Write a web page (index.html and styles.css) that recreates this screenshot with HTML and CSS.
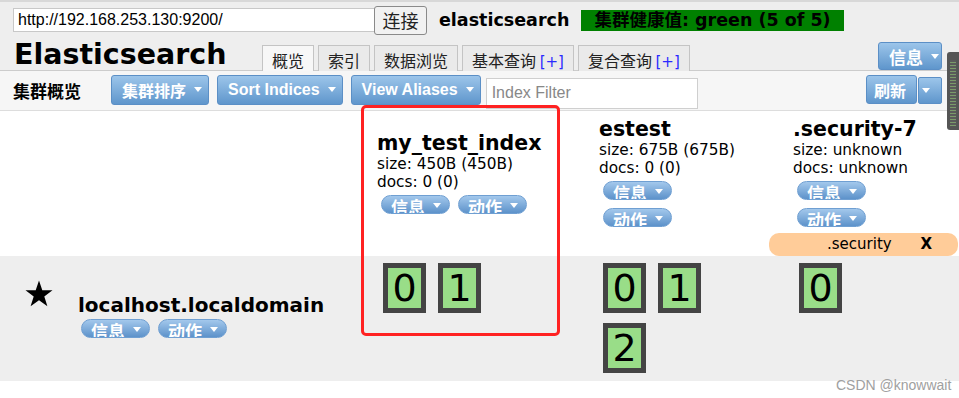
FILE: index.html
```html
<!DOCTYPE html>
<html lang="zh-CN">
<head>
    <meta charset="UTF-8">
    <title>elasticsearch-head</title>
    <link rel="stylesheet" href="styles.css">
</head>
<body>
    <div class="header">
        <div class="conn-row">
            <input class="base-uri" type="text" value="http://192.168.253.130:9200/">
            <button class="connect-btn">连接</button>
            <span class="cluster-name">elasticsearch</span>
            <span class="health">集群健康值: green (5 of 5)</span>
        </div>
        <div class="title-row">
            <div class="logo">Elasticsearch</div>
            <div class="tabs">
                <div class="tab active">概览</div>
                <div class="tab">索引</div>
                <div class="tab">数据浏览</div>
                <div class="tab">基本查询 <span class="plus">[+]</span></div>
                <div class="tab">复合查询 <span class="plus">[+]</span></div>
            </div>
            <button class="btn info-btn">信息<span class="caret"></span></button>
        </div>
    </div>

    <div class="toolbar">
        <span class="toolbar-title">集群概览</span>
        <button class="btn">集群排序<span class="caret"></span></button>
        <button class="btn">Sort Indices<span class="caret"></span></button>
        <button class="btn">View Aliases<span class="caret"></span></button>
        <input class="filter" type="text" placeholder="Index Filter">
        <div class="refresh-group">
            <button class="btn refresh-btn">刷新</button>
            <button class="btn caret-btn"><span class="caret"></span></button>
        </div>
    </div>

    <div class="overview">
        <div class="cell"></div>
        <div class="cell index-cell">
            <div class="index-name">my_test_index</div>
            <div class="index-stat">size: 450B (450B)</div>
            <div class="index-stat">docs: 0 (0)</div>
            <div class="actions">
                <span class="pill">信息<span class="caret"></span></span>
                <span class="pill">动作<span class="caret"></span></span>
            </div>
        </div>
        <div class="cell index-cell">
            <div class="index-name">estest</div>
            <div class="index-stat">size: 675B (675B)</div>
            <div class="index-stat">docs: 0 (0)</div>
            <div class="actions stacked">
                <span class="pill">信息<span class="caret"></span></span>
                <span class="pill">动作<span class="caret"></span></span>
            </div>
        </div>
        <div class="cell index-cell">
            <div class="index-name">.security-7</div>
            <div class="index-stat">size: unknown</div>
            <div class="index-stat">docs: unknown</div>
            <div class="actions stacked">
                <span class="pill">信息<span class="caret"></span></span>
                <span class="pill">动作<span class="caret"></span></span>
            </div>
        </div>

        <div class="alias-row">
            <div class="alias">.security <span class="alias-x">X</span></div>
        </div>

        <div class="cell node-cell">
            <svg class="star" width="28" height="27" viewBox="0 0 28 27">
                <path d="M14 0.5 L17.3 10.2 L27.5 10.3 L19.3 16.4 L22.4 26.3 L14 20.3 L5.6 26.3 L8.7 16.4 L0.5 10.3 L10.7 10.2 Z" fill="#000"/>
            </svg>
            <div class="node-info">
                <div class="node-name">localhost.localdomain</div>
                <div class="actions">
                    <span class="pill">信息<span class="caret"></span></span>
                    <span class="pill">动作<span class="caret"></span></span>
                </div>
            </div>
        </div>
        <div class="cell shard-cell">
            <div class="shards">
                <div class="shard">0</div>
                <div class="shard">1</div>
            </div>
        </div>
        <div class="cell shard-cell">
            <div class="shards narrow">
                <div class="shard">0</div>
                <div class="shard">1</div>
                <div class="shard">2</div>
            </div>
        </div>
        <div class="cell shard-cell">
            <div class="shards">
                <div class="shard">0</div>
            </div>
        </div>
    </div>

    <!-- screenshot annotations -->
    <div class="highlight"></div>
    <div class="meter"></div>
    <div class="watermark">CSDN @knowwait</div>
</body>
</html>
```

FILE: styles.css
```css
body {
    margin: 0;
    font-family: "DejaVu Sans", "Noto Sans CJK SC", sans-serif;
    color: #000;
    background: #fff;
    position: relative;
    height: 398px;
    overflow: hidden;
}
button {
    font-family: inherit;
}
.header {
    background: #eeeeee;
    border-top: 2px solid #d8d8d8;
    height: 68px;
}
.conn-row {
    display: flex;
    align-items: center;
    height: 34px;
    padding-left: 13px;
    padding-top: 1px;
}
.base-uri {
    width: 352px;
    height: 22px;
    padding: 0 4px;
    margin: 0;
    border: 1px solid #c8c8c8;
    font-family: "Liberation Sans", sans-serif;
    font-size: 16px;
    color: #000;
    background: #fff;
}
.connect-btn {
    height: 29px;
    width: 53px;
    margin: 0 0 0 -1px;
    padding: 0;
    border: 1px solid #8a8a8a;
    border-radius: 3px;
    background: #f2f2f2;
    font-family: "Noto Sans CJK SC", sans-serif;
    font-size: 18px;
    line-height: 27px;
    color: #222;
}
.cluster-name {
    margin-left: 12px;
    font-weight: bold;
    font-size: 17.5px;
}
.health {
    margin-left: 12px;
    height: 21px;
    width: 263px;
    background: #008000;
    font-weight: bold;
    font-size: 17.5px;
    line-height: 21px;
    box-sizing: border-box;
    padding-left: 13px;
    white-space: nowrap;
    overflow: hidden;
}
.title-row {
    display: flex;
    align-items: flex-end;
    height: 34px;
    padding-left: 14px;
}
.logo {
    font-weight: bold;
    font-size: 28.5px;
    line-height: 34px;
    width: 248px;
    align-self: flex-start;
    margin-top: 1px;
}
.tabs {
    display: flex;
    gap: 4px;
}
.tab {
    height: 25px;
    padding: 0 9px;
    border: 1px solid #c4c4c4;
    border-bottom: none;
    background: #eaeaea;
    font-family: "Noto Sans CJK SC", sans-serif;
    font-size: 16px;
    line-height: 28px;
    color: #222;
    white-space: nowrap;
}
.tab.active {
    background: #f7f7f7;
}
.plus {
    color: #2a2aff;
    font-family: "DejaVu Sans", sans-serif;
    font-size: 15px;
}
.btn {
    display: inline-flex;
    align-items: center;
    height: 30px;
    padding: 0 6px 0 10px;
    border: 1px solid #5b8fc6;
    border-radius: 3px;
    background: linear-gradient(#9cc5ea, #5f96cc);
    color: #fff;
    font-family: "Liberation Sans", "Noto Sans CJK SC", sans-serif;
    font-weight: bold;
    font-size: 16px;
    white-space: nowrap;
    box-sizing: border-box;
}
.caret {
    display: inline-block;
    width: 0;
    height: 0;
    margin-left: 8px;
    border-left: 4.5px solid transparent;
    border-right: 4.5px solid transparent;
    border-top: 5px solid #fff;
}
.info-btn {
    margin-left: auto;
    margin-right: 17px;
    margin-bottom: 1px;
    height: 28px;
    width: 64px;
    padding: 0 0 0 10px;
    font-size: 17px;
}
.toolbar {
    display: flex;
    align-items: center;
    height: 39px;
    padding-left: 13px;
    background: #f6f6f6;
    border-top: 1px solid #cccccc;
    border-bottom: 1px solid #dddddd;
}
.toolbar-title {
    font-family: "Noto Sans CJK SC", sans-serif;
    font-weight: bold;
    font-size: 17px;
    width: 98px;
}
.toolbar .btn {
    margin-right: 8px;
    margin-top: -2px;
}
.filter {
    height: 31px;
    width: 212px;
    margin: 5px 0 0 -3px;
    padding: 0 5px;
    box-sizing: border-box;
    border: 1px solid #cfcfcf;
    background: #fff;
    font-family: "Liberation Sans", sans-serif;
    font-size: 16px;
}
.filter::placeholder {
    color: #888;
}
.refresh-group {
    display: flex;
    margin-left: auto;
    margin-right: 17px;
}
.toolbar .refresh-btn {
    margin-right: 1px;
    width: 51px;
    padding: 0 0 0 7px;
    height: 29px;
}
.toolbar .caret-btn {
    margin: 0;
    width: 24px;
    height: 27px;
    padding: 0 0 0 1px;
    border-radius: 2px;
}
.caret-btn .caret {
    margin-left: 2px;
}
.overview {
    display: grid;
    grid-template-columns: 370px 222px 194px 1fr;
    grid-template-rows: 122px 23px 125px;
}
.cell {
    box-sizing: border-box;
}
.index-cell {
    align-self: center;
    padding-left: 7px;
}
.index-name {
    font-weight: bold;
    font-size: 20.5px;
    line-height: 24px;
}
.index-stat {
    font-size: 15.3px;
    line-height: 18px;
}
.actions {
    display: flex;
    gap: 8px;
    margin: 4px 0 0 4px;
}
.actions.stacked {
    flex-direction: column;
    align-items: flex-start;
    gap: 8px;
}
.pill {
    display: inline-flex;
    align-items: flex-start;
    box-sizing: border-box;
    width: 69px;
    height: 19px;
    padding: 0 0 0 9px;
    border: 1px solid #6f9fd2;
    border-radius: 10px;
    background: linear-gradient(#a3c8ec, #5d92ca);
    color: #fff;
    font-family: "Noto Sans CJK SC", sans-serif;
    font-weight: bold;
    font-size: 17px;
    line-height: 22px;
    overflow: hidden;
}
.pill .caret {
    margin-top: 7px;
    margin-left: 8px;
}
.alias-row {
    grid-column: 4;
    display: flex;
    align-items: stretch;
}
.alias {
    margin-left: -17px;
    width: 189px;
    border-radius: 10px;
    background: #ffcc99;
    font-size: 15px;
    line-height: 23px;
    padding-left: 58px;
    box-sizing: border-box;
}
.alias-x {
    font-weight: bold;
    margin-left: 24px;
}
.node-cell {
    background: #eeeeee;
    display: flex;
    padding: 24px 0 0 25px;
}
.star {
    flex: none;
    margin-right: 25px;
}
.node-info {
    padding-top: 13px;
}
.node-name {
    font-weight: bold;
    font-size: 20px;
    line-height: 24px;
}
.node-info .actions {
    margin-left: 3px;
    margin-top: 2px;
}
.shard-cell {
    background: #eeeeee;
    padding: 7px 0 0 13px;
}
.shard-cell:last-child {
    padding-left: 13px;
}
.shards {
    display: flex;
    flex-wrap: wrap;
    column-gap: 12px;
    row-gap: 10px;
}
.shards.narrow {
    width: 110px;
    margin-left: -2px;
}
.shard {
    width: 43px;
    height: 50px;
    box-sizing: border-box;
    border: 5px solid #444444;
    background: #99dd88;
    font-size: 38px;
    line-height: 40px;
    text-align: center;
}
.highlight {
    position: absolute;
    left: 361px;
    top: 105px;
    width: 193px;
    height: 225px;
    border: 3px solid #ff2222;
    border-radius: 5px;
}
.meter {
    position: absolute;
    left: 947px;
    top: 52px;
    width: 12px;
    height: 78px;
    border-radius: 3px 0 0 3px;
    background:
        repeating-linear-gradient(#5a5a5a 0 2px, #7b9a6a 2px 3px) 3px 8px / 6px 66px no-repeat,
        #555555;
}
.watermark {
    position: absolute;
    left: 836px;
    top: 377px;
    font-family: "Liberation Sans", sans-serif;
    font-size: 14px;
    color: #a0a0a0;
}
```
